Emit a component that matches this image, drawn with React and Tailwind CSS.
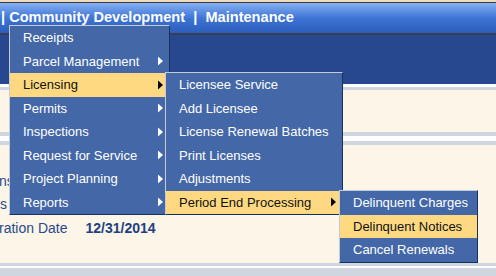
import React from 'react';

const mainItems = [
  { label: 'Receipts' },
  { label: 'Parcel Management', sub: true },
  { label: 'Licensing', sub: true, active: true },
  { label: 'Permits', sub: true },
  { label: 'Inspections', sub: true },
  { label: 'Request for Service', sub: true },
  { label: 'Project Planning', sub: true },
  { label: 'Reports', sub: true },
];

const licensingItems = [
  { label: 'Licensee Service' },
  { label: 'Add Licensee' },
  { label: 'License Renewal Batches' },
  { label: 'Print Licenses' },
  { label: 'Adjustments' },
  { label: 'Period End Processing', sub: true, active: true },
];

const periodItems = [
  { label: 'Delinquent Charges' },
  { label: 'Delinquent Notices', active: true },
  { label: 'Cancel Renewals' },
];

const Arrow = ({ dark }) => (
  <svg className="absolute right-[6px] top-1/2 -translate-y-1/2" width="5" height="9" viewBox="0 0 5 9">
    <polygon points="0,0 5,4.5 0,9" fill={dark ? '#000000' : '#ffffff'} />
  </svg>
);

const Menu = ({ items, className }) => (
  <div
    className={`absolute bg-[#4467a8] border border-t-[#c3cbd9] border-l-[#c3cbd9] border-r-[#17325c] border-b-[#17325c] ${className}`}
  >
    {items.map((item) => (
      <div
        key={item.label}
        className={`relative flex items-center h-[23.5px] pl-[13px] text-[13px] ${
          item.active ? 'bg-[#fed981] text-[#111111]' : 'text-white'
        }`}
      >
        {item.label}
        {item.sub && <Arrow dark={item.active} />}
      </div>
    ))}
  </div>
);

const Divider = () => (
  <div className="flex flex-col">
    <div className="h-[4px] bg-[#d0d6e0]" />
    <div className="h-[5px] bg-white" />
    <div className="h-[4px] bg-[#d0d6e0]" />
  </div>
);

export default function App() {
  return (
    <div
      className="relative flex flex-col w-[496px] h-[276px] overflow-hidden bg-[#fdf5e8]"
      style={{ fontFamily: '"Liberation Sans", Arial, sans-serif' }}
    >
      {/* top strip */}
      <div className="h-[2px] bg-[#efdcbc]" />
      <div className="h-px bg-[#3b3b46]" />

      {/* module bar */}
      <div className="h-[30px] flex items-center pl-[1px] bg-gradient-to-b from-[#86b0f0] via-[#3f74d6] to-[#2c5eba] text-white font-bold text-[14.6px] whitespace-pre">
        {'| Community Development  |  Maintenance'}
      </div>
      <div className="h-[2px] bg-[#3a3d52]" />

      {/* dark band */}
      <div className="h-[49px] bg-[#27488f]" />
      <div className="h-[3px] bg-white" />
      <div className="h-[3px] bg-[#d0d6e0]" />

      {/* content */}
      <div className="h-[42px]" />
      <Divider />

      <div className="flex-1 flex flex-col text-[14px] text-[#29498c]">
        <div className="h-[25px]" />
        <div className="h-[23px] flex items-center -ml-[1px]">ns</div>
        <div className="h-[23px] flex items-center">s</div>
        <div className="h-[24px] flex items-center gap-[18px] -ml-[1px]">
          <span>ration Date</span>
          <span className="font-bold text-[14px] text-[#203f80]">12/31/2014</span>
        </div>
      </div>

      <div className="h-[3px] bg-[#d0d6e0]" />
      <div className="h-[2px] bg-white" />
      <div className="h-[8px] bg-[#d0d6e0]" />

      {/* flyout menus */}
      <Menu items={mainItems} className="left-[9px] top-[25px] w-[161px]" />
      <Menu items={licensingItems} className="left-[165px] top-[72px] w-[178px]" />
      <Menu items={periodItems} className="left-[339px] top-[190px] w-[139px]" />
    </div>
  );
}
